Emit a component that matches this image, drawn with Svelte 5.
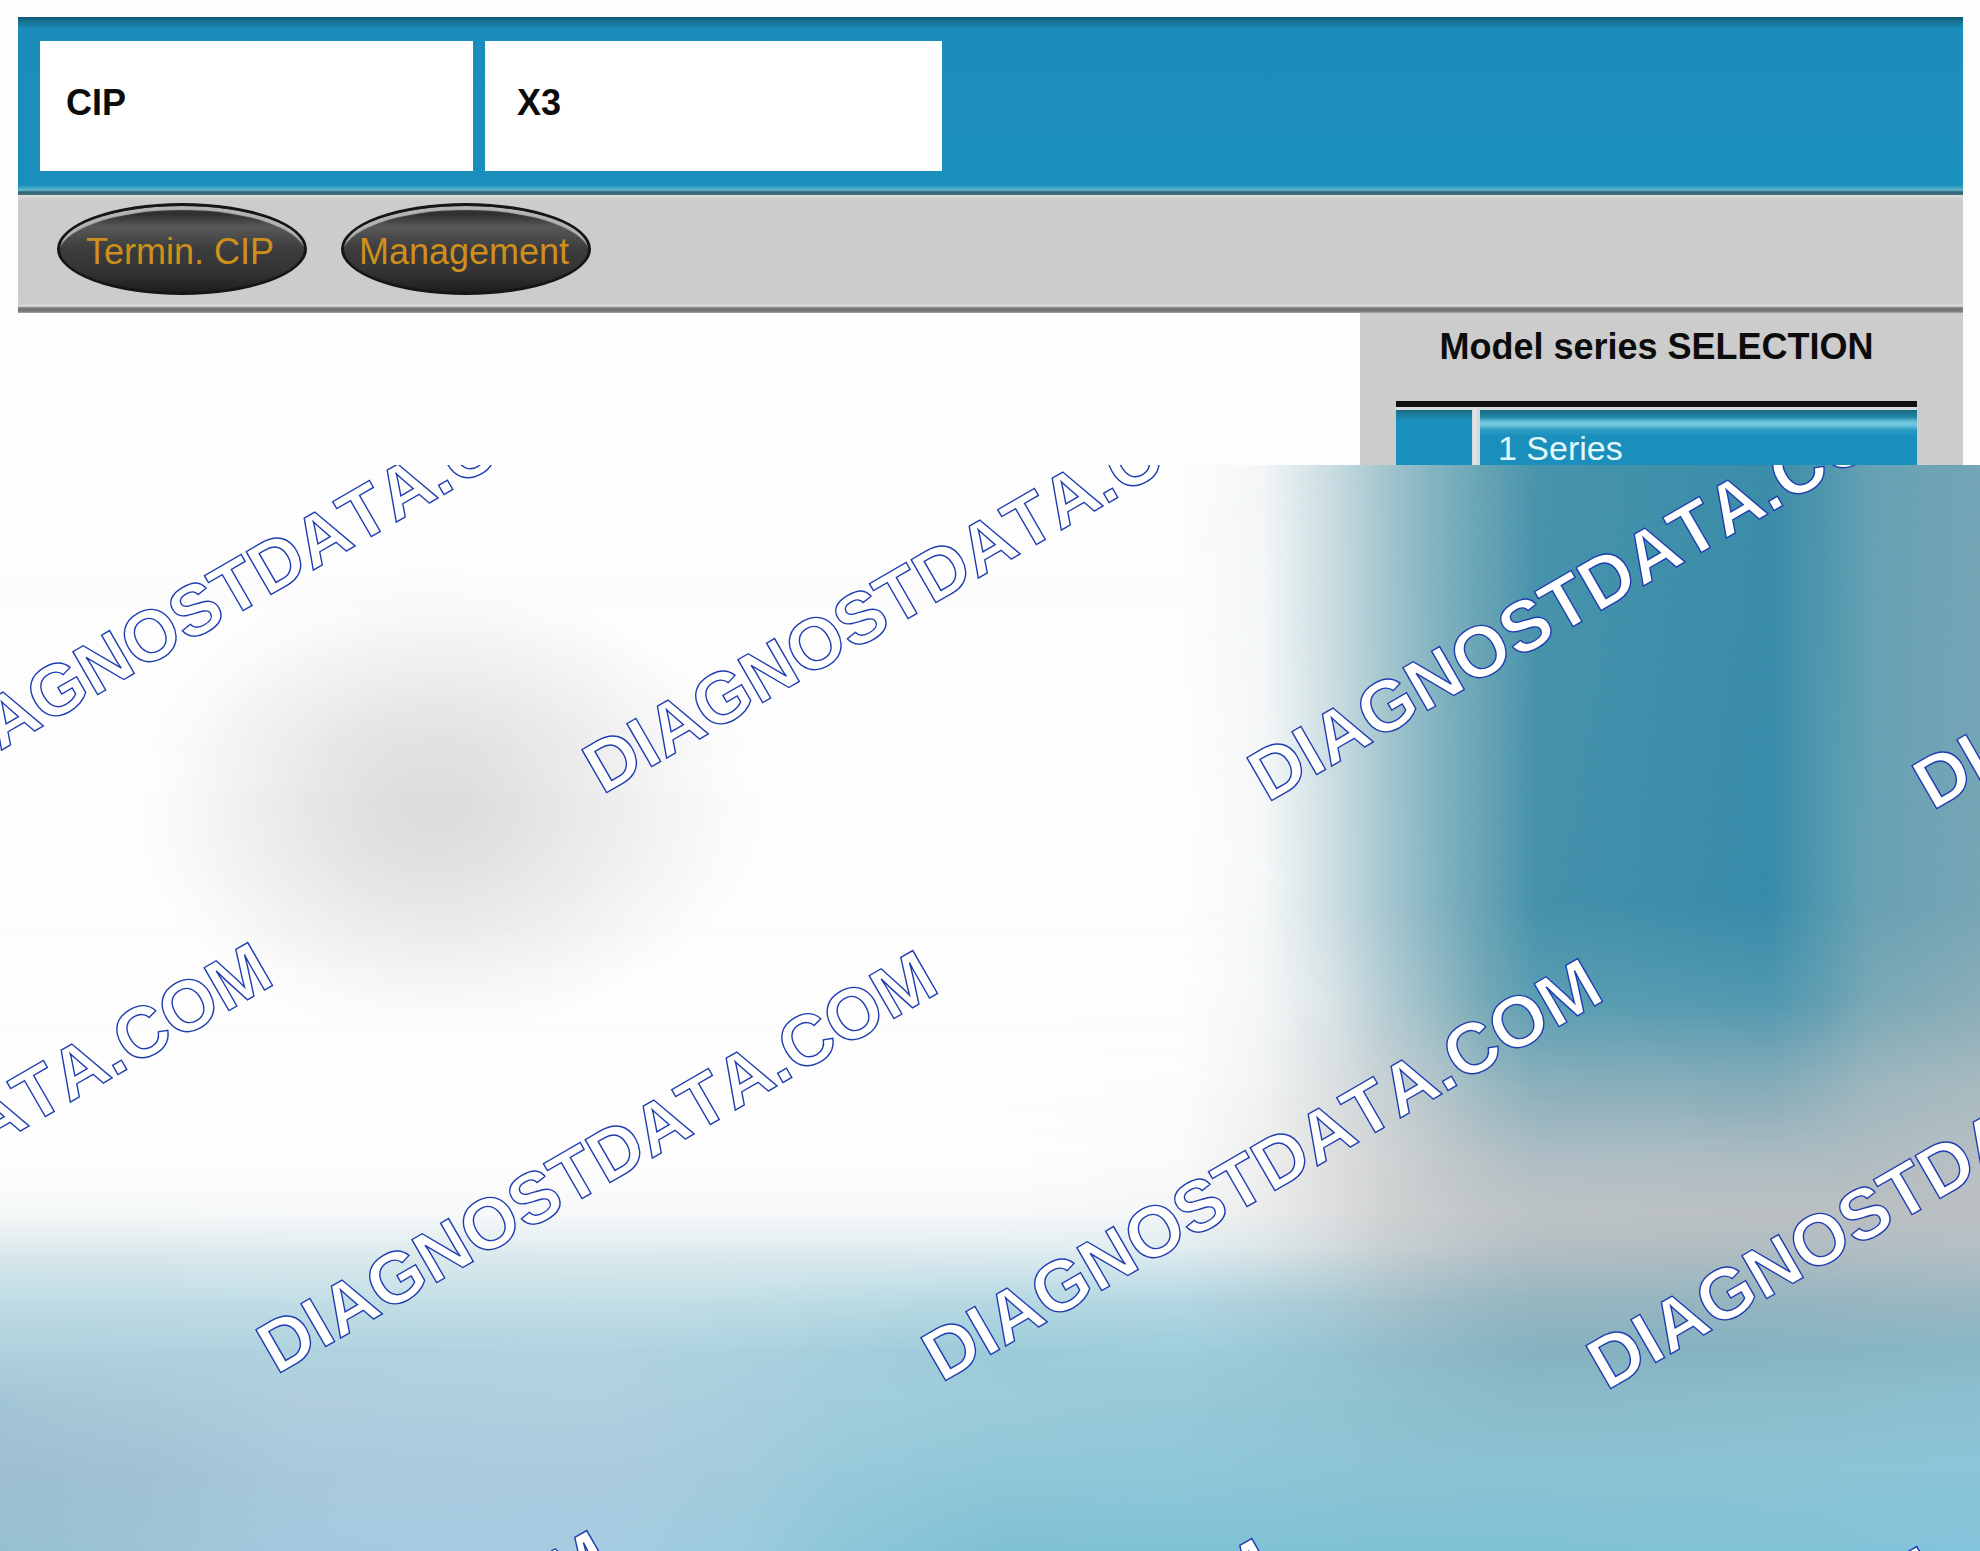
<script>
  const fields = ["CIP", "X3"];
  const actions = ["Termin. CIP", "Management"];
  const series = ["1 Series"];

  // backdrop colours: one row per height, one colour per column
  const columns = [0, 150, 300, 600, 750, 850, 1000, 1180, 1262, 1333, 1384, 1435, 1486, 1537, 1770, 1825, 1869, 1980];
  const rows = [
    { y: 0, colors: "fdfdfd fdfdfd fdfdfd fdfdfd fdfdfd fdfdfd fdfdfd fdfdfd f4f6f7 c8dce1 a5c6cf 83b3c0 66a4b4 4894ac 3b8da9 5097ae 66a1b4 74a6b6" },
    { y: 435, colors: "fdfdfd fdfdfd fdfdfd fdfdfd fdfdfd fdfdfd fdfdfd fdfdfd f6f8f8 ccdee3 a7c7d0 85b4c2 66a3b4 4591ab 378ba9 5299af 68a1b3 76a5b5" },
    { y: 535, colors: "fdfdfd fdfdfd fdfdfd fdfdfd fdfdfd fdfdfd fdfdfd fdfdfd f5f7f7 d8e3e6 b5cdd4 96bbc5 73a8b6 5a9eb2 5198b0 639fb2 79a8b5 8aadb8" },
    { y: 625, colors: "fdfdfd fdfdfd fdfdfd fdfdfd fdfdfd fdfdfd fdfdfd fcfcfc f2f3f3 dbe0e1 c8d1d4 b5c6cb 9dbac2 8db1bc 88adb9 93b2bc 9fb7bf a9bbc0" },
    { y: 700, colors: "fdfdfd fdfdfd fdfdfd fdfdfd fdfdfd fdfdfd fdfdfd fafafa eeeeee dedede d1d4d5 c4cacc b9c3c7 b1bfc5 b0bdc3 b0bdc2 b2bdc2 b8c0c4" },
    { y: 750, colors: "f5f8f8 f5f8f8 f6f8f9 f6f8f9 f6f8f9 f6f8f9 f6f8f9 f3f5f6 eaecec dcdedf d0d2d2 c7cccd c0c6c8 bcc3c5 bac0c2 bac0c2 babfc1 babfc1" },
    { y: 785, colors: "dce9ed dde9ed dfebee dfebef dfebef dfebef dfecf0 dfecf0 dae5e8 d0dadd c6d0d3 bfc9cd b8c3c8 b2bec3 b0bdc2 b0bdc2 b1bec3 b3c0c6" },
    { y: 835, colors: "bedce4 c0dde5 c2dee6 c4dfe6 c1dee5 bcdce4 b7d9e3 b4d7e2 afd0db aacad5 a7c3cc a0bdc7 9ab9c3 97b6c0 95b5c0 96b5c0 98b6c1 9bb7c2" },
    { y: 885, colors: "b0d0dd b0d1de b0d2df b2d3e0 abd1df a5cedc 9ccbd9 9ecedc 9bc9d7 97c3d1 93bdcb 8fb9c7 8ab5c3 86b2c0 86b3c1 87b4c2 87b5c3 88b7c5" },
    { y: 935, colors: "a3c6d6 a9cad8 b0cedd b0d0df a8cedd a1cddb 9ccbd9 98c9d8 95c6d5 92c4d2 8fc1cf 8dbecc 8bbcca 8abac8 8bbdcb 8bbdcc 8cbecd 8cc0d0" },
    { y: 1005, colors: "9dbfd0 a1c2d4 a9c9dd abcadf a3cbdd 97cada 90c8d8 8fc8d9 8ec6d7 8dc5d5 8cc3d3 8cc3d3 8bc3d3 8bc3d3 8cc4d4 8cc4d5 8cc5d6 8bc5d8" },
    { y: 1086, colors: "96bfd2 9dc4d6 a4c9de a5cce0 9acbdc 8cc6d8 80c0d4 80c1d5 80c1d5 80c1d5 80c1d5 80c1d5 80c1d5 80c1d5 82c2d7 82c2d7 83c3d8 84c4da" },
  ];

  const marks = [
    { x: -59, y: 320 },
    { x: 606, y: 328 },
    { x: 1271, y: 336 },
    { x: 1936, y: 344 },
    { x: -385, y: 900 },
    { x: 280, y: 908 },
    { x: 945, y: 916 },
    { x: 1610, y: 924 },
    { x: -46, y: 1488 },
    { x: 619, y: 1496 },
    { x: 1284, y: 1504 },
  ];

  function bandStyle(row, index) {
    const stops = row.colors
      .split(" ")
      .map((color, i) => `#${color} ${((columns[i] / 1980) * 100).toFixed(2)}%`)
      .join(", ");
    let style = `background: linear-gradient(to right, ${stops});`;
    if (index > 0) {
      // each row fades in over the one above it
      style += ` mask-image: linear-gradient(to bottom, transparent ${rows[index - 1].y}px, black ${row.y}px);`;
    }
    return style;
  }
</script>

<div class="screen">
  <header class="banner">
    {#each fields as field}
      <div class="field">{field}</div>
    {/each}
  </header>

  <nav class="toolbar">
    {#each actions as action}
      <button class="oval">{action}</button>
    {/each}
  </nav>

  <main class="content">
    <section class="panel">
      <h1>Model series SELECTION</h1>
      <ul>
        {#each series as name}
          <li>
            <span class="marker"></span>
            <button class="series">{name}</button>
          </li>
        {/each}
      </ul>
    </section>
  </main>
</div>

<div class="cover">
  {#each rows as row, index}
    <div class="band" style={bandStyle(row, index)}></div>
  {/each}
  <div class="shade"></div>
  <svg class="marks" width="100%" height="1086">
    {#each marks as mark}
      <text transform="translate({mark.x} {mark.y}) rotate(-30)" x="-4" y="0" stroke-width="1.4">DIAGNOSTDATA.COM</text>
    {/each}
  </svg>
</div>

<style>
  :global(body) {
    margin: 0;
    background: #fdfdfd;
    font-family: "Liberation Sans", Arial, sans-serif;
  }

  .screen {
    height: 465px;
    box-sizing: border-box;
    padding: 17px 17px 0 18px;
    overflow: hidden;
  }

  .banner {
    display: flex;
    gap: 12px;
    height: 178px;
    box-sizing: border-box;
    padding: 24px 22px;
    background: linear-gradient(to bottom, #0d5672 0, #15728f 4px, #1b8dba 12px, #1b8fbc 168px, #3fa6c4 171px, #69b9ce 173px, #2d6678 175px, #47707c 178px);
  }

  .field {
    box-sizing: border-box;
    width: 433px;
    padding: 0 26px;
    background: white;
    color: #0c0c0c;
    font-size: 36px;
    font-weight: bold;
    line-height: 124px;
  }

  .field + .field {
    width: 457px;
    padding: 0 32px;
  }

  .toolbar {
    display: flex;
    gap: 34px;
    height: 118px;
    box-sizing: border-box;
    padding: 8px 39px 0;
    background: linear-gradient(to bottom, #dcdcdc 0, #cccccc 5px, #cccccc 108px, #dedede 111px, #777777 113px, #747474 116px, #aaaaaa 118px);
  }

  .oval {
    width: 250px;
    height: 92px;
    padding: 6px 4px 0 0;
    border: 3px solid #161616;
    border-radius: 50%;
    background: linear-gradient(to bottom, #303030 10%, #585858 24%, #3c3c3c 50%, #343434 75%, #1e1e1e 100%);
    box-shadow: inset 0 6px 1px -2px #b4b4b4;
    color: #cf8f1c;
    font-family: inherit;
    font-size: 36px;
    white-space: nowrap;
  }

  .content {
    display: flex;
    justify-content: flex-end;
  }

  .panel {
    box-sizing: border-box;
    width: 603px;
    height: 152px;
    padding: 12px 46px 0 36px;
    background: #cccccc;
  }

  h1 {
    margin: 0;
    color: #0c0c0c;
    font-size: 36px;
    line-height: 44px;
    text-align: center;
  }

  ul {
    margin: 32px 0 0;
    padding: 0;
    list-style: none;
  }

  li {
    display: grid;
    grid-template-columns: 76px 1fr;
    gap: 8px;
    height: 64px;
    border-top: 6px solid #111111;
    padding-top: 3px;
    background: linear-gradient(to right, #d8dee0 77px, #e4eaec 78px, #d0d6d8 83px, #d8dee0 84px);
  }

  .marker {
    background: linear-gradient(to bottom, #1b6c83, #1b8fbc 10px);
  }

  .series {
    padding: 8px 0 0 18px;
    border: 0;
    background: linear-gradient(to bottom, #1b6c83 0, #1f84a5 7px, #6fc6de 12px, #6fc6de 15px, #2c9cc2 20px, #1b8fbc 26px);
    color: #e2f8fc;
    font-family: inherit;
    font-size: 34px;
    line-height: 60px;
    text-align: left;
  }

  .cover {
    position: relative;
    height: 1086px;
    overflow: hidden;
  }

  .band,
  .shade,
  .marks {
    position: absolute;
    inset: 0;
  }

  .shade {
    background:
      radial-gradient(ellipse 300px 240px at 430px 340px, rgba(0, 0, 0, 0.1), rgba(0, 0, 0, 0.08) 25%, rgba(0, 0, 0, 0.04) 55%, rgba(0, 0, 0, 0.01) 82%, transparent),
      radial-gradient(ellipse 310px 210px at 460px 345px, rgba(0, 0, 0, 0.04), rgba(0, 0, 0, 0.03) 50%, rgba(0, 0, 0, 0.01) 85%, transparent);
  }

  .marks text {
    fill: white;
    stroke: #1f3db0;
    font-size: 72px;
    font-weight: bold;
    font-kerning: none;
  }
</style>
